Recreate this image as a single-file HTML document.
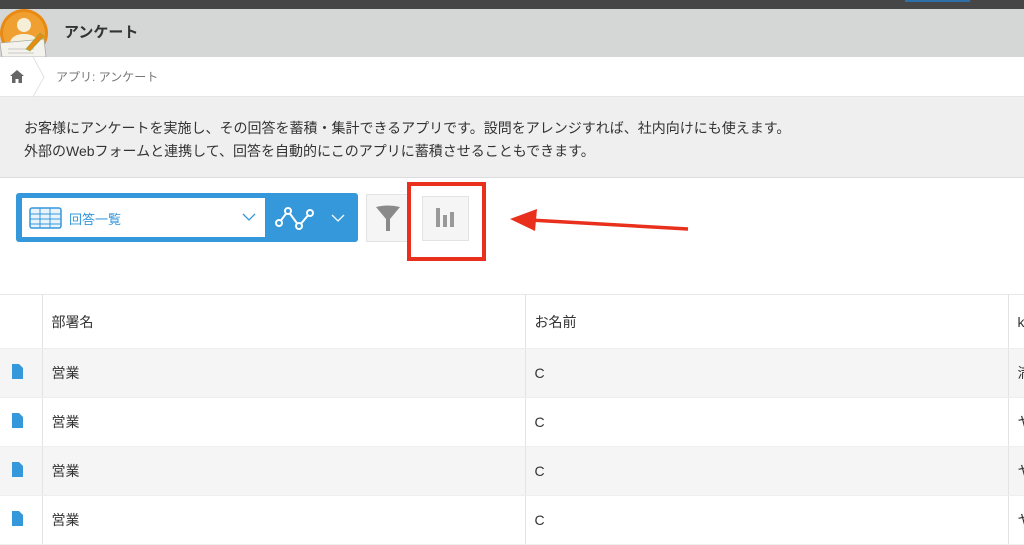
<!DOCTYPE html>
<html><head><meta charset="utf-8"><style>
*{margin:0;padding:0;box-sizing:border-box}
body{width:1024px;height:545px;overflow:hidden;background:#fff;font-family:"Liberation Sans","Noto Sans CJK JP",sans-serif;color:#333;position:relative}
.abs{position:absolute}
td{border-right:1px solid #e3e3e3;border-bottom:1px solid #eee;font-size:14px;color:#333;padding-left:9px}
td.ic{padding-left:12px}
</style></head><body>
<div class="abs" style="left:0;top:0;width:1024px;height:9px;background:#464646"></div>
<div class="abs" style="left:905px;top:0;width:65px;height:2px;background:#2f6fa8"></div>
<div class="abs" style="left:0;top:9px;width:1024px;height:48px;background:#d5d6d6"></div>
<svg class="abs" style="left:0;top:9px" width="50" height="48" viewBox="0 0 50 48">
<circle cx="24" cy="24" r="24" fill="#e98a12"/>
<circle cx="24" cy="24" r="21" fill="#f0a030"/>
<circle cx="24" cy="16" r="7" fill="#f6efd8"/>
<path d="M9 36 Q11 25 24 25 Q37 25 39 36Z" fill="#f6efd8"/>
<path d="M0 34 L44 30 L46 48 L2 48Z" fill="#f4f2ec" stroke="#aaa" stroke-width=".8"/>
<path d="M8 40H34M8 44H34" stroke="#bbb" stroke-width=".8"/>
<path d="M26 40 L40 24 L44 27 L30 42Z" fill="#e98a12" stroke="#8a4" stroke-width=".6"/>
</svg>
<div class="abs" style="left:64px;top:21px;font-size:15px;font-weight:bold;color:#333">アンケート</div>
<div class="abs" style="left:0;top:57px;width:1024px;height:40px;background:#fff;border-bottom:1px solid #e5e5e5"></div>
<svg class="abs" style="left:10px;top:70px" width="14" height="13" viewBox="0 0 14 13"><path d="M7 0 L14 6 L12 6 L12 13 L8.5 13 L8.5 9 L5.5 9 L5.5 13 L2 13 L2 6 L0 6Z" fill="#666"/></svg>
<svg class="abs" style="left:32px;top:57px" width="14" height="40"><path d="M1 0 L12 20 L1 40" fill="none" stroke="#e2e2e2"/></svg>
<div class="abs" style="left:56px;top:68px;font-size:12px;color:#777">アプリ: アンケート</div>
<div class="abs" style="left:0;top:97px;width:1024px;height:81px;background:#efefef;border-bottom:1px solid #ddd"></div>
<div class="abs" style="left:24px;top:117px;font-size:14px;line-height:23px;color:#333">お客様にアンケートを実施し、その回答を蓄積・集計できるアプリです。設問をアレンジすれば、社内向けにも使えます。<br>外部のWebフォームと連携して、回答を自動的にこのアプリに蓄積させることもできます。</div>
<div class="abs" style="left:16px;top:193px;width:342px;height:49px;background:#3498db;border-radius:3px"></div>
<div class="abs" style="left:22px;top:198px;width:243px;height:39px;background:#fff"></div>
<svg class="abs" style="left:29px;top:207px" width="33" height="22" viewBox="0 0 33 22"><rect x="1" y="1" width="31" height="20" rx="2" fill="#eaf3fb" stroke="#3498db" stroke-width="1.5"/><path d="M1 7H32M1 12H32M1 17H32M11 1V21M21 1V21" stroke="#3498db" stroke-width="1"/></svg>
<div class="abs" style="left:69px;top:209px;font-size:13px;color:#3498db">回答一覧</div>
<svg class="abs" style="left:242px;top:213px" width="14" height="9"><path d="M1 1 L7 7 L13 1" fill="none" stroke="#3498db" stroke-width="1.3"/></svg>
<svg class="abs" style="left:275px;top:205px" width="42" height="26" viewBox="0 0 42 26"><path d="M4 18 L13 6 L24 21 L35 8" fill="none" stroke="#fff" stroke-width="2"/><circle cx="4" cy="18" r="3" fill="#3498db" stroke="#fff" stroke-width="2"/><circle cx="13" cy="6" r="3" fill="#3498db" stroke="#fff" stroke-width="2"/><circle cx="24" cy="21" r="3" fill="#3498db" stroke="#fff" stroke-width="2"/><circle cx="35" cy="8" r="3" fill="#3498db" stroke="#fff" stroke-width="2"/></svg>
<svg class="abs" style="left:331px;top:214px" width="14" height="9"><path d="M1 1 L7 7 L13 1" fill="none" stroke="#fff" stroke-width="1.3"/></svg>
<div class="abs" style="left:366px;top:194px;width:42px;height:48px;background:#f5f5f5;border:1px solid #e3e3e3"></div>
<svg class="abs" style="left:375px;top:205px" width="26" height="28" viewBox="0 0 26 28"><path d="M1 2 Q13 -1 25 2 L15 14 L15 26 L11 26 L11 14Z" fill="#8a8a8a"/></svg>
<div class="abs" style="left:422px;top:196px;width:47px;height:45px;background:#f5f5f5;border:1px solid #e3e3e3"></div>
<svg class="abs" style="left:435px;top:207px" width="21" height="21"><rect x="1" y="1" width="4" height="19" fill="#999"/><rect x="8" y="8" width="4" height="12" fill="#999"/><rect x="15" y="5" width="4" height="15" fill="#999"/></svg>
<div class="abs" style="left:407px;top:182px;width:79px;height:79px;border:4px solid #e8301c"></div>
<svg class="abs" style="left:505px;top:205px" width="185" height="32"><path d="M183 24 L25 15" stroke="#e8301c" stroke-width="3.5"/><path d="M5 14 L32 4 L30 26Z" fill="#e8301c"/></svg>
<table class="abs" style="left:0;top:294px;width:1040px;border-collapse:collapse;border-top:1px solid #e8e8e8">
<tr style="height:54px"><td style="width:42px"></td><td style="width:483px">部署名</td><td style="width:483px">お名前</td><td>k</td></tr>
<tr style="height:49px;background:#f5f5f5"><td class="ic"><svg width="11" height="15"><path d="M0 0H7L11 4V15H0Z" fill="#3498db"/></svg></td><td>営業</td><td>C</td><td>満</td></tr>
<tr style="height:49px"><td class="ic"><svg width="11" height="15"><path d="M0 0H7L11 4V15H0Z" fill="#3498db"/></svg></td><td>営業</td><td>C</td><td>ヤ</td></tr>
<tr style="height:49px;background:#f5f5f5"><td class="ic"><svg width="11" height="15"><path d="M0 0H7L11 4V15H0Z" fill="#3498db"/></svg></td><td>営業</td><td>C</td><td>ヤ</td></tr>
<tr style="height:49px"><td class="ic"><svg width="11" height="15"><path d="M0 0H7L11 4V15H0Z" fill="#3498db"/></svg></td><td>営業</td><td>C</td><td>ヤ</td></tr>
</table>
</body></html>
